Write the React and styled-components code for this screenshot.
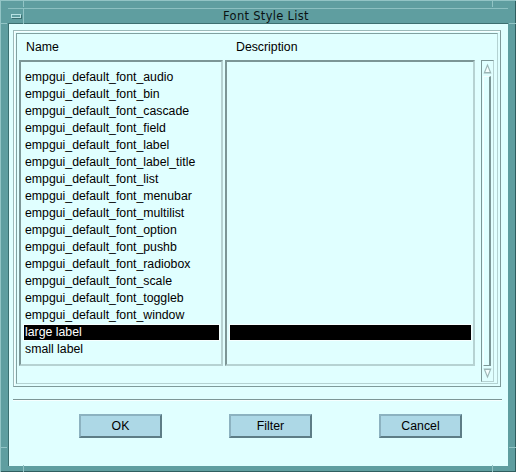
import React from 'react';
import styled, { createGlobalStyle } from 'styled-components';

const GlobalStyle = createGlobalStyle`
  html, body {
    margin: 0;
    padding: 0;
    background: #5f9ea0;
  }
  body {
    font-family: "Liberation Sans", Arial, sans-serif;
    font-size: 12.3px;
  }
`;

const names = [
    'empgui_default_font_audio',
    'empgui_default_font_bin',
    'empgui_default_font_cascade',
    'empgui_default_font_field',
    'empgui_default_font_label',
    'empgui_default_font_label_title',
    'empgui_default_font_list',
    'empgui_default_font_menubar',
    'empgui_default_font_multilist',
    'empgui_default_font_option',
    'empgui_default_font_pushb',
    'empgui_default_font_radiobox',
    'empgui_default_font_scale',
    'empgui_default_font_toggleb',
    'empgui_default_font_window',
    'large label',
    'small label',
];
const selectedIndex = 15;

const Window = styled.div`
    position: relative;
    width: 516px;
    height: 472px;
    box-sizing: border-box;
    padding: 8px 8px 6px 8px;
    display: flex;
    flex-direction: column;
    background: #5f9ea0;
    box-shadow: inset 1px 1px 0 #92c4c5, inset -1px -1px 0 #2f5e60;
`;

const Notch = styled.div`
    position: absolute;
    background: #92c4c5;
    width: ${props => props.vertical ? '1px' : '7px'};
    height: ${props => props.vertical ? '7px' : '1px'};
`;

const TitleBar = styled.div`
    display: flex;
    height: 16px;
    box-shadow: inset 0 -1px 0 #3c6f70, inset 0 1px 0 #8cc0c1;
`;

const MenuButton = styled.div`
    width: 16px;
    height: 16px;
    box-sizing: border-box;
    display: flex;
    align-items: center;
    justify-content: center;
    border-right: 1px solid #92c4c5;
    box-shadow: inset 0 -1px 0 #3c6f70;
`;

const MenuGlyph = styled.div`
    width: 10px;
    height: 4px;
    box-sizing: border-box;
    border: 1px solid #b8e2e3;
    box-shadow: 1px 1px 0 #3c6f70;
    margin-top: -1px;
`;

const Title = styled.div`
    flex: 1;
    text-align: center;
    line-height: 16px;
    font-family: "DejaVu Sans", sans-serif;
    font-size: 11.5px;
    color: #0a1212;
    letter-spacing: 0.3px;
`;

const Client = styled.div`
    flex: 1;
    background: #e0ffff;
    padding: 6px 7px 0 5px;
    display: flex;
    flex-direction: column;
    box-shadow: inset 1px 0 0 #3c6f70;
`;

const GroupFrame = styled.div`
    height: 357px;
    box-sizing: border-box;
    border: 1px solid #9cbaba;
    border-right-color: #7e9a9a;
    border-bottom-color: #7e9a9a;
    padding: 2px;
    box-shadow: inset 1px 1px 0 #f6ffff;
    display: flex;
`;

const InnerPanel = styled.div`
    flex: 1;
    border: 1px solid #82a0a0;
    border-right-color: #b4d2d2;
    border-bottom-color: #b4d2d2;
    padding: 0 3px 0 2px;
    display: flex;
    flex-direction: column;
`;

const HeaderRow = styled.div`
    display: flex;
    height: 26px;
    align-items: center;
`;

const HeaderCell = styled.div`
    width: ${props => props.width}px;
    padding-left: ${props => props.indent}px;
    box-sizing: border-box;
    color: #000;
`;

const Body = styled.div`
    display: flex;
    align-items: flex-start;
`;

const ListBox = styled.div`
    width: ${props => props.width}px;
    height: 306px;
    box-sizing: border-box;
    margin-right: ${props => props.gap}px;
    border-top: 2px solid #7c9696;
    border-left: 2px solid #7c9696;
    border-bottom: 2px solid #b6d2d2;
    border-right: 2px solid #b6d2d2;
    padding-top: 7px;
    overflow: hidden;
`;

const Item = styled.div`
    height: 17px;
    line-height: 15px;
    box-sizing: border-box;
    margin: 0 1px 0 2px;
    padding-left: 1px;
    border: 1px solid ${props => props.selected ? '#f6ffff' : 'transparent'};
    background: ${props => props.selected ? '#000' : 'transparent'};
    color: ${props => props.selected ? '#fff' : '#000'};
    white-space: nowrap;
`;

const Scrollbar = styled.div`
    width: 13px;
    height: 322px;
    box-sizing: border-box;
    border-top: 1px solid #7c9696;
    border-left: 1px solid #7c9696;
    border-bottom: 1px solid #b6d2d2;
    border-right: 1px solid #b6d2d2;
    padding: 1px;
    display: flex;
    flex-direction: column;
`;

const Arrow = styled.svg`
    display: block;
    width: 9px;
    height: 13px;
    flex: none;
`;

const Slider = styled.div`
    flex: 1;
    margin: 1px 1px 1px 0;
    border-top: 1px solid #f6ffff;
    border-left: 1px solid #f6ffff;
    border-bottom: 1px solid #7c9696;
    border-right: 2px solid #7c9696;
`;

const Separator = styled.div`
    margin-top: 12px;
    width: 489px;
    height: 1px;
    background: #7c9696;
    box-shadow: 0 1px 0 #f6ffff;
`;

const ButtonRow = styled.div`
    display: flex;
    gap: 67px;
    padding-left: 66px;
    margin-top: 14px;
`;

const Button = styled.button`
    width: 83px;
    height: 24px;
    box-sizing: border-box;
    padding: 0;
    background: #add8e6;
    border-style: solid;
    border-width: 2px;
    border-color: #8cb2c0 #5d7d86 #5d7d86 #8cb2c0;
    font-family: "Liberation Sans", Arial, sans-serif;
    font-size: 12.3px;
    color: #000;
`;

function UpArrow() {
    return (
        <Arrow viewBox="0 0 9 13">
            <polygon points="4.5,1.5 8.5,11.5 0.5,11.5" fill="#9ab4b4" />
            <polygon points="4.5,4.5 6.7,10 2.3,10" fill="#f4ffff" />
        </Arrow>
    );
}

function DownArrow() {
    return (
        <Arrow viewBox="0 0 9 13">
            <polygon points="0.5,1.5 8.5,1.5 4.5,11.5" fill="#9ab4b4" />
            <polygon points="2.3,3 6.7,3 4.5,8.5" fill="#f4ffff" />
        </Arrow>
    );
}

export default function App() {
    return (
        <>
            <GlobalStyle />
            <Window>
                <Notch vertical style={{ left: 23, top: 0 }} />
                <Notch vertical style={{ left: 492, top: 0 }} />
                <Notch style={{ left: 0, top: 23 }} />
                <Notch style={{ right: 0, top: 23 }} />
                <Notch style={{ left: 0, top: 447 }} />
                <Notch style={{ right: 0, top: 447 }} />
                <Notch vertical style={{ left: 23, bottom: 0 }} />
                <Notch vertical style={{ left: 492, bottom: 0 }} />
                <TitleBar>
                    <MenuButton><MenuGlyph /></MenuButton>
                    <Title>Font Style List</Title>
                </TitleBar>
                <Client>
                    <GroupFrame>
                        <InnerPanel>
                            <HeaderRow>
                                <HeaderCell width={206} indent={7}>Name</HeaderCell>
                                <HeaderCell width={250} indent={11}>Description</HeaderCell>
                            </HeaderRow>
                            <Body>
                                <ListBox width={204} gap={2}>
                                    {names.map((name, index) => (
                                        <Item key={index} selected={index === selectedIndex}>{name}</Item>
                                    ))}
                                </ListBox>
                                <ListBox width={250} gap={6}>
                                    {names.map((name, index) => (
                                        <Item key={index} selected={index === selectedIndex}>&nbsp;</Item>
                                    ))}
                                </ListBox>
                                <Scrollbar>
                                    <UpArrow />
                                    <Slider />
                                    <DownArrow />
                                </Scrollbar>
                            </Body>
                        </InnerPanel>
                    </GroupFrame>
                    <Separator />
                    <ButtonRow>
                        <Button>OK</Button>
                        <Button>Filter</Button>
                        <Button>Cancel</Button>
                    </ButtonRow>
                </Client>
            </Window>
        </>
    );
}
